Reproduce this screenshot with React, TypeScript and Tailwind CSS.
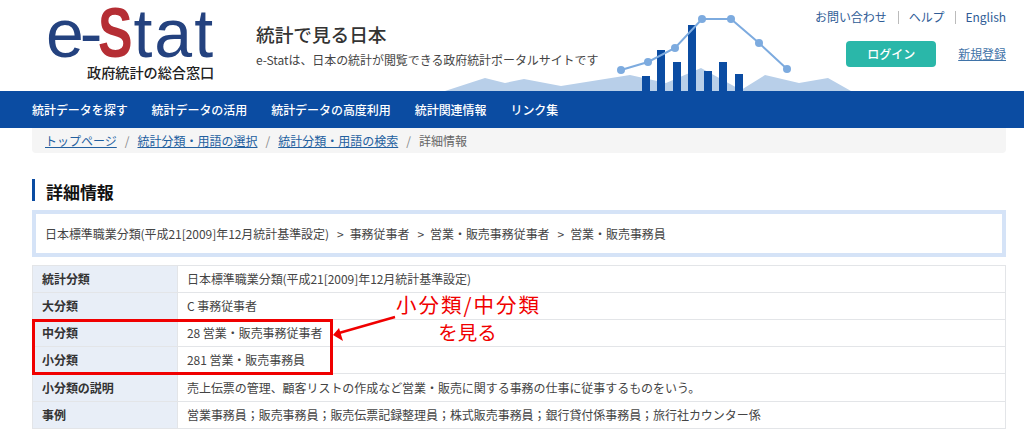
const navItems = ["統計データを探す", "統計データの活用", "統計データの高度利用", "統計関連情報", "リンク集"];

const crumbs = ["トップページ", "統計分類・用語の選択", "統計分類・用語の検索"];

const rows = [
  { label: "統計分類", value: "日本標準職業分類(平成21[2009]年12月統計基準設定)", h: "h-[26px]" },
  { label: "大分類", value: "C 事務従事者", h: "h-[27px]" },
  { label: "中分類", value: "28 営業・販売事務従事者", h: "h-[27px]" },
  { label: "小分類", value: "281 営業・販売事務員", h: "h-[27px]" },
  { label: "小分類の説明", value: "売上伝票の管理、顧客リストの作成など営業・販売に関する事務の仕事に従事するものをいう。", h: "h-[28px]" },
  { label: "事例", value: "営業事務員；販売事務員；販売伝票記録整理員；株式販売事務員；銀行貸付係事務員；旅行社カウンター係", h: "h-[27px]" },
];

const bars = [
  [642, 76],
  [657, 50],
  [673, 62],
  [688, 25],
  [704, 71],
  [719, 62],
  [735, 74],
];

const points = [
  [621, 70],
  [648, 62],
  [675, 48],
  [702, 19],
  [731, 19],
  [759, 43],
  [787, 69],
];

function HeaderChart() {
  return (
    <svg className="absolute left-0 top-0" width="1024" height="91" viewBox="0 0 1024 91">
      <polygon
        points="445,91 485,78 505,83 524,79 561,86 630,75 666,83 701,68 741,90 765,75 799,83 828,78 851,91"
        fill="#b8cfe9"
      />
      {bars.map(([x, y]) => (
        <rect key={x} x={x} y={y} width="8" height={91 - y} fill="#0b4ca2" />
      ))}
      <polyline points={points.map((p) => p.join(",")).join(" ")} fill="none" stroke="#7dabdf" strokeWidth="2" />
      {points.map(([x, y]) => (
        <circle key={x} cx={x} cy={y} r="4" fill="#7dabdf" />
      ))}
    </svg>
  );
}

function Logo() {
  return (
    <div className="w-[256px] pl-[46px] shrink-0">
      <div className="flex items-baseline h-[62px] pt-[5px] font-['Liberation_Sans',sans-serif] text-[#24427f] text-[68px] leading-[56px]">
        <span className="tracking-[-4px]">e-</span>
        <span className="inline-block w-[35px] scale-x-[0.74] origin-left text-[70px] font-bold text-[#b52e34]">S</span>
        <span className="tracking-[2px]">tat</span>
      </div>
      <div className="pl-[41px] text-[14.2px] leading-[20px] font-medium text-[#222]">政府統計の総合窓口</div>
    </div>
  );
}

export default function App() {
  return (
    <div className="relative w-[1024px] h-[439px] overflow-hidden bg-white font-['Noto_Sans_CJK_JP','Noto_Sans',sans-serif] text-[12px] tracking-[-0.05px] text-[#444]">
      <header className="relative h-[91px]">
        <HeaderChart />
        <div className="relative flex h-full pr-[18px]">
          <Logo />
          <div className="pt-[20px]">
            <h1 className="text-[18.7px] leading-[27px] font-medium text-[#333]">統計で見る日本</h1>
            <p className="mt-[4px] text-[12px] leading-[18px] text-[#444] tracking-[-0.07px]">
              e-Statは、日本の統計が閲覧できる政府統計ポータルサイトです
            </p>
          </div>
          <div className="ml-auto flex flex-col items-end pt-[8px]">
            <div className="flex items-center h-[18px] text-[#2f5c96]">
              <span>お問い合わせ</span>
              <span className="ml-[11px] mr-[10px] h-[13px] w-px bg-[#bbb]"></span>
              <span>ヘルプ</span>
              <span className="mx-[10px] h-[13px] w-px bg-[#bbb]"></span>
              <span>English</span>
            </div>
            <div className="flex items-center gap-[22px] mt-[15px]">
              <button className="w-[90px] h-[26px] rounded bg-[#2ab7a9] text-white text-[12px] font-medium">ログイン</button>
              <a className="underline text-[#3f73a8]">新規登録</a>
            </div>
          </div>
        </div>
      </header>

      <nav className="flex h-[37px] items-center gap-[24px] bg-[#0b4ca2] pl-[32px] text-white font-medium">
        {navItems.map((item) => (
          <span key={item}>{item}</span>
        ))}
      </nav>

      <main className="ml-[32px] w-[974px]">
        <div className="flex h-[25px] items-center rounded-b bg-[#f5f5f5] pl-[13px] text-[#666] tracking-normal">
          {crumbs.map((c) => (
            <span key={c} className="flex">
              <a className="underline text-[#23609f]">{c}</a>
              <span className="mx-[8px] text-[#888]">/</span>
            </span>
          ))}
          <span>詳細情報</span>
        </div>

        <h2 className="mt-[26px] h-[22px] border-l-[3px] border-[#0b4ca2] pl-[11px] text-[17px] leading-[25px] font-bold text-[#111]">
          詳細情報
        </h2>

        <div className="mt-[9px] flex h-[47px] items-center border-[4px] border-[#d5e3f7] pl-[9px] text-[#444]">
          <span>日本標準職業分類(平成21[2009]年12月統計基準設定)</span>
          <span className="ml-[8px] mr-[6px]">&gt;</span>
          <span>事務従事者</span>
          <span className="ml-[8px] mr-[6px]">&gt;</span>
          <span>営業・販売事務従事者</span>
          <span className="ml-[8px] mr-[6px]">&gt;</span>
          <span>営業・販売事務員</span>
        </div>

        <div className="mt-[8px] border border-[#e3e5e8]">
          {rows.map((row, i) => (
            <div key={row.label} className={`flex ${row.h} ${i > 0 ? "border-t border-[#e3e5e8]" : ""}`}>
              <div className="flex w-[145px] shrink-0 items-center border-r border-[#e3e5e8] bg-[#e8eef7] pl-[9px] font-bold text-[#333]">
                {row.label}
              </div>
              <div className="flex items-center pl-[9px] text-[#444]">{row.value}</div>
            </div>
          ))}
        </div>
      </main>

      <div className="absolute left-[32px] top-[319px] h-[56px] w-[301px] border-[3px] border-[#f00000]"></div>
      <svg className="absolute left-[325px] top-[310px]" width="80" height="40" viewBox="0 0 80 40">
        <line x1="70" y1="7" x2="14" y2="23" stroke="#f00000" strokeWidth="2.5" />
        <polygon points="8,25 14,18 18,31" fill="#f00000" />
      </svg>
      <div className="absolute left-[396px] top-[291px] w-[143px] text-center text-[#f00000]">
        <div className="whitespace-nowrap text-[20.5px] leading-[27px] tracking-[2px]">小分類/中分類</div>
        <div className="text-[19.5px] leading-[27px]">を見る</div>
      </div>
    </div>
  );
}
